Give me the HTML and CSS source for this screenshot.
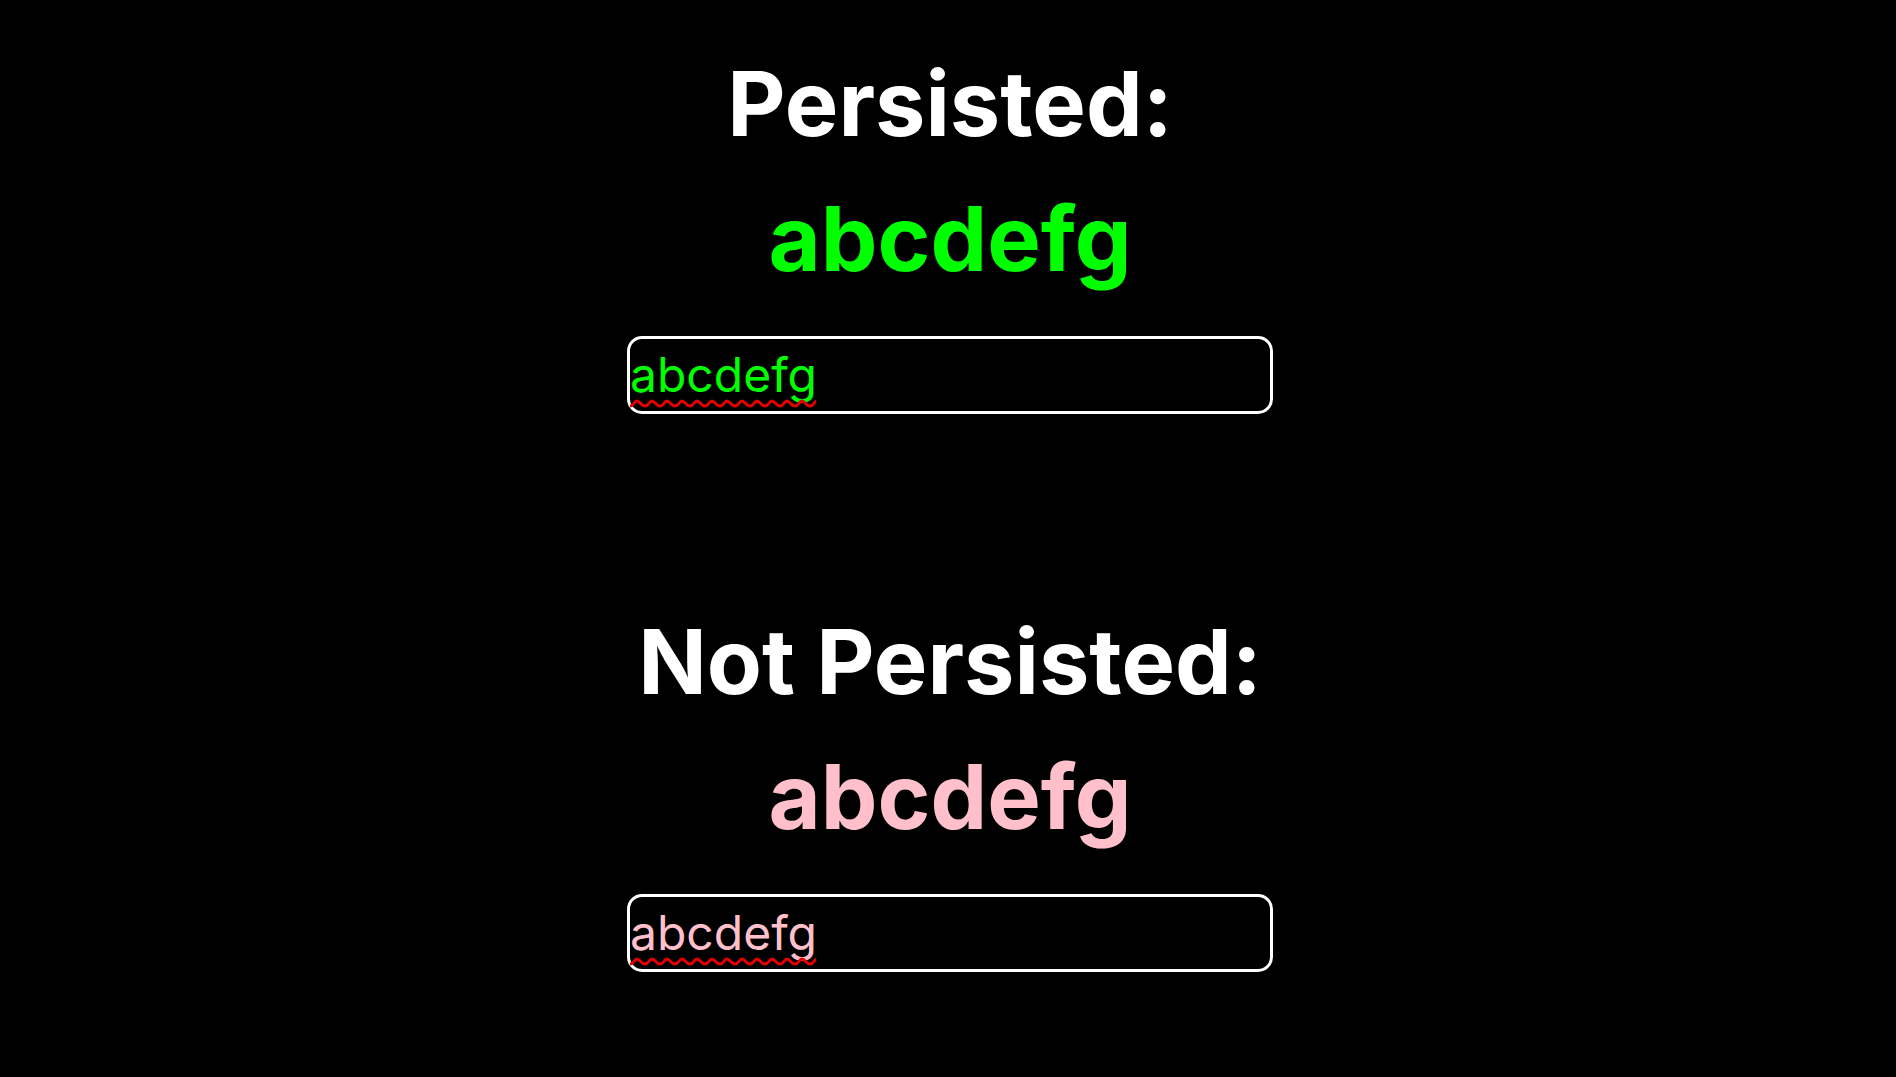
FILE: index.html
```html
<!DOCTYPE html>
<html lang="en">
<head>
<meta charset="utf-8">
<title>Persisted state</title>
<link rel="stylesheet" href="styles.css">
</head>
<body>
<main class="page">
  <section class="group persisted">
    <h1 class="title" id="persisted-label">Persisted:</h1>
    <h1 class="value">abcdefg</h1>
    <div class="field">
      <input class="input" type="text" value="abcdefg" spellcheck="false" aria-labelledby="persisted-label">
      <svg class="squiggle" width="186" height="9" viewBox="0 0 186 9" aria-hidden="true"><defs><pattern id="wave" width="15" height="9" patternUnits="userSpaceOnUse"><path d="M-8 2C-4 2 -4 7 0 7S4 2 7 2S11 7 15 7S19 2 22 2" fill="none" stroke="#e60000" stroke-width="3"/></pattern></defs><rect width="186" height="9" fill="url(#wave)"/></svg>
    </div>
  </section>
  <section class="group transient">
    <h1 class="title" id="transient-label">Not Persisted:</h1>
    <h1 class="value">abcdefg</h1>
    <div class="field">
      <input class="input" type="text" value="abcdefg" spellcheck="false" aria-labelledby="transient-label">
      <svg class="squiggle" width="186" height="9" viewBox="0 0 186 9" aria-hidden="true"><rect width="186" height="9" fill="url(#wave)"/></svg>
    </div>
  </section>
</main>
</body>
</html>
```
FILE: styles.css
```css
* { box-sizing: border-box; }
body { margin: 0; background: #000; color: #fff; font-family: Inter, "Liberation Sans", sans-serif; }
.page { display: flex; flex-direction: column; align-items: center; gap: 180px; padding: 36px 0 36px 4px; }
.group { display: flex; flex-direction: column; align-items: center; width: 646px; max-width: 100%; }
.title, .value { margin: 0; font-size: 90px; line-height: 135px; font-weight: 700; white-space: nowrap; }
.persisted { --accent: #0f0; }
.transient { --accent: pink; }
.value { color: var(--accent); }
.field { position: relative; width: 100%; margin-top: 30px; }
.input { display: block; width: 100%; height: 78px; padding: 0 0 2px; border: 3px solid #fff; border-radius: 15px; background: #000; color: var(--accent); font: 400 48px/70px Inter, "Liberation Sans", sans-serif; outline: none; }
.squiggle { position: absolute; left: 3px; bottom: 6px; }
```
